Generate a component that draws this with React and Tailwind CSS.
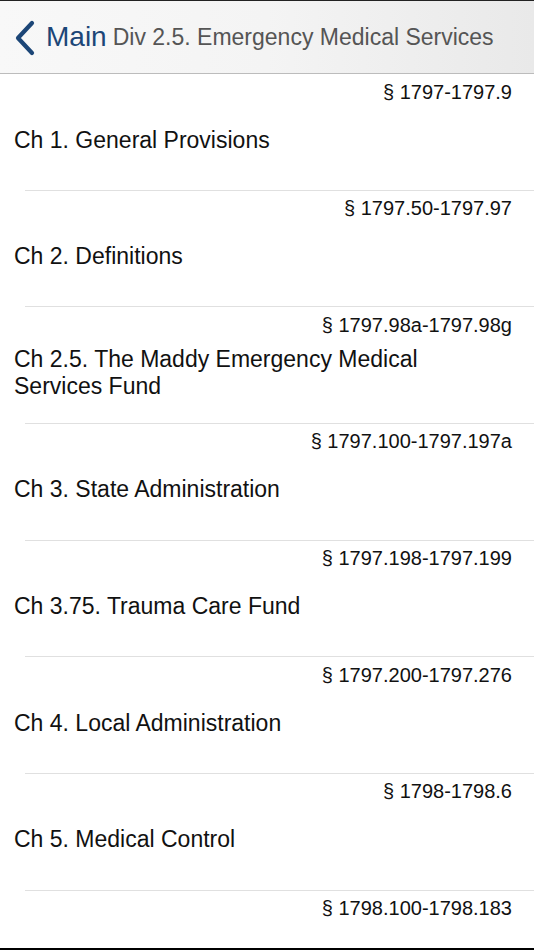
import React from "react";

const chapters = [
  { range: "§ 1797-1797.9", title: "Ch 1. General Provisions" },
  { range: "§ 1797.50-1797.97", title: "Ch 2. Definitions" },
  { range: "§ 1797.98a-1797.98g", title: "Ch 2.5. The Maddy Emergency Medical Services Fund" },
  { range: "§ 1797.100-1797.197a", title: "Ch 3. State Administration" },
  { range: "§ 1797.198-1797.199", title: "Ch 3.75. Trauma Care Fund" },
  { range: "§ 1797.200-1797.276", title: "Ch 4. Local Administration" },
  { range: "§ 1798-1798.6", title: "Ch 5. Medical Control" },
  { range: "§ 1798.100-1798.183", title: "" },
];

function ChapterRow({ range, title }) {
  return (
    <div className="flex flex-col h-[116.67px] shrink-0">
      <div className="h-[35px] flex items-center justify-end pr-[22px] text-[20px] text-[#111]">
        {range}
      </div>
      <div className="h-[62px] flex items-center pl-[14px] pr-[80px] text-[23px] leading-[27px] text-[#111]">
        {title}
      </div>
      <div className="flex-1" />
      <div className="ml-[25px] h-px bg-[#e0e0e0]" />
    </div>
  );
}

export default function App() {
  return (
    <div
      className="w-[534px] h-[950px] flex flex-col bg-white overflow-hidden"
      style={{ fontFamily: '"Liberation Sans", Arial, sans-serif' }}
    >
      <div className="h-px bg-[#222] shrink-0" />
      <header className="h-[73px] shrink-0 flex items-center bg-gradient-to-r from-[#f8f8f8] via-[#f4f4f4] to-[#e9e9e9] border-b border-[#bcbcbc]">
        <svg width="24" height="36" viewBox="0 0 24 36" className="ml-[13px] mt-[1px]">
          <path d="M19 3 L5 18 L19 33" fill="none" stroke="#1c4677" strokeWidth="4.2" strokeLinecap="round" strokeLinejoin="round" />
        </svg>
        <span className="ml-[9px] text-[28px] text-[#1c4677]">Main</span>
        <span className="ml-[6px] text-[23px] text-[#555]">Div 2.5. Emergency Medical Services</span>
      </header>
      <div className="flex-1 flex flex-col overflow-hidden">
        {chapters.map((c) => (
          <ChapterRow key={c.range} range={c.range} title={c.title} />
        ))}
      </div>
      <div className="h-[2px] bg-black shrink-0" />
    </div>
  );
}
